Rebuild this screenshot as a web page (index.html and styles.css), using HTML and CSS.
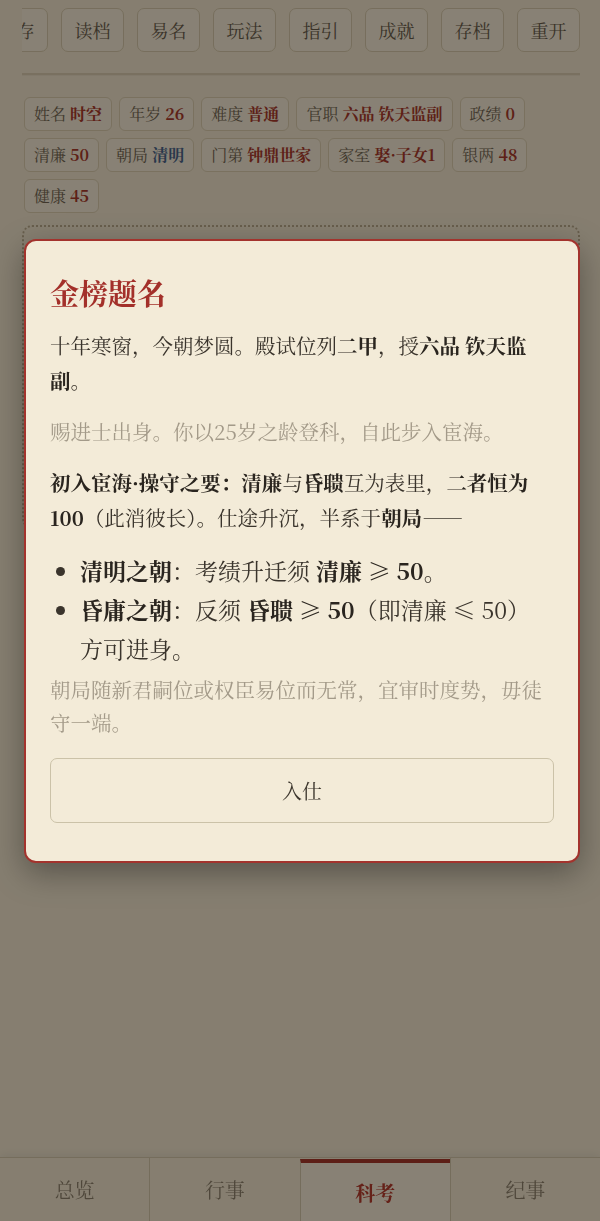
FILE: index.html
```html
<!DOCTYPE html>
<html lang="zh-CN">
<head>
<meta charset="UTF-8" />
<meta name="viewport" content="width=device-width, initial-scale=1" />
<title>宦海浮沉</title>
<link rel="stylesheet" href="styles.css">
</head>
<body>

<div class="app">
  <nav class="toolbar">
    <button class="tool">暂存</button>
    <button class="tool">读档</button>
    <button class="tool">易名</button>
    <button class="tool">玩法</button>
    <button class="tool">指引</button>
    <button class="tool">成就</button>
    <button class="tool">存档</button>
    <button class="tool">重开</button>
  </nav>

  <div class="rule"></div>

  <div class="stats">
    <span class="chip">姓名 <b>时空</b></span>
    <span class="chip">年岁 <b>26</b></span>
    <span class="chip">难度 <b>普通</b></span>
    <span class="chip">官职 <b>六品 钦天监副</b></span>
    <span class="chip">政绩 <b>0</b></span>
    <span class="chip">清廉 <b>50</b></span>
    <span class="chip">朝局 <b class="blue">清明</b></span>
    <span class="chip">门第 <b>钟鼎世家</b></span>
    <span class="chip">家室 <b>娶·子女1</b></span>
    <span class="chip">银两 <b>48</b></span>
    <span class="chip">健康 <b>45</b></span>
  </div>

  <section class="panel"></section>
</div>

<footer class="tabs">
  <div class="tab">总览</div>
  <div class="tab">行事</div>
  <div class="tab active">科考</div>
  <div class="tab">纪事</div>
</footer>

<div class="mask">
  <div class="modal">
    <h2>金榜题名</h2>
    <p>十年寒窗，今朝梦圆。殿试位列<b>二甲</b>，授<b>六品 钦天监副</b>。</p>
    <p class="muted">赐进士出身。你以25岁之龄登科，自此步入宦海。</p>
    <p><b>初入宦海·操守之要：清廉</b>与<b>昏聩</b>互为表里，<b>二者恒为100</b>（此消彼长）。仕途升沉，半系于<b>朝局</b>——</p>
    <ul>
      <li><b>清明之朝</b>：考绩升迁须 <b>清廉 ≥ 50</b>。</li>
      <li><b>昏庸之朝</b>：反须 <b>昏聩 ≥ 50</b>（即清廉 ≤ 50）方可进身。</li>
    </ul>
    <p class="muted note">朝局随新君嗣位或权臣易位而无常，宜审时度势，毋徒守一端。</p>
    <button class="enter">入仕</button>
  </div>
</div>

</body>
</html>
```

FILE: styles.css
```css
body {
  font-family: "Noto Serif CJK SC", "Liberation Serif", "Noto Sans CJK SC", serif;
  background: #efe7d4;
  margin: 0;
  color: #3a342c;
}
.app {
  padding: 8px 20px 0 22px;
}
.toolbar {
  display: flex;
  justify-content: flex-end;
  gap: 13px;
  overflow: hidden;
}
.tool {
  flex: 0 0 63px;
  height: 44px;
  background: #f3ecdc;
  border: 1px solid #d3c8ae;
  border-radius: 7px;
  font-family: inherit;
  font-size: 18px;
  color: #5e574b;
  padding: 0;
}
.rule {
  margin-top: 21px;
  border-top: 2px solid #d6ccb5;
  border-bottom: 1px solid #e6ddc9;
}
.stats {
  display: flex;
  flex-wrap: wrap;
  gap: 7px;
  margin-top: 21px;
  padding-left: 2px;
}
.chip {
  height: 34px;
  line-height: 32px;
  box-sizing: border-box;
  padding: 0 9px;
  background: #f3ecdc;
  border: 1px solid #d8cdb3;
  border-radius: 6px;
  font-size: 16px;
  color: #6a6152;
}
.chip b {
  color: #a3332a;
}
.chip b.blue {
  color: #3f5f8c;
}
.panel {
  margin-top: 12px;
  height: 300px;
  border: 2px dotted #b6aa90;
  border-radius: 10px;
}
.tabs {
  position: fixed;
  left: 0;
  right: 0;
  bottom: 0;
  height: 63px;
  display: flex;
  background: #efe7d4;
  border-top: 1px solid #cfc5ad;
  box-shadow: 0 -3px 8px rgba(0,0,0,0.06);
}
.tab {
  flex: 1;
  display: flex;
  align-items: center;
  justify-content: center;
  font-size: 20px;
  color: #877d6d;
  border-left: 1px solid #cfc5ad;
}
.tab:first-child {
  border-left: none;
}
.tab.active {
  color: #b0342b;
  font-weight: bold;
  background: #f3ecdd;
  border-top: 4px solid #a2302a;
  margin-top: 1px;
}

/* overlay dialog */
.mask {
  position: fixed;
  inset: 0;
  background: rgba(18,12,4,0.48);
  padding: 239px 20px 0 24px;
}
.modal {
  background: #f3ebd8;
  border: 2px solid #a3332d;
  border-radius: 12px;
  padding: 33px 24px 38px;
  box-shadow: 0 10px 32px rgba(0,0,0,0.35);
}
.modal h2 {
  margin: 0 0 16px;
  font-size: 29px;
  line-height: 38px;
  color: #a3302a;
}
.modal p {
  margin: 0 0 16px;
  font-size: 20.5px;
  line-height: 35px;
}
.modal b {
  color: #2a251f;
}
.modal .muted {
  color: #a39a89;
}
.modal ul {
  margin: 0 8px 0 0;
  padding-left: 30px;
  font-size: 23px;
  line-height: 39px;
}
.modal .note {
  margin-top: 5px;
  margin-bottom: 19px;
  line-height: 33px;
}
.enter {
  display: block;
  width: 100%;
  height: 65px;
  background: #f3ebd8;
  border: 1px solid #cbc2a8;
  border-radius: 7px;
  font-family: inherit;
  font-size: 20px;
  color: #3d372e;
}
```
